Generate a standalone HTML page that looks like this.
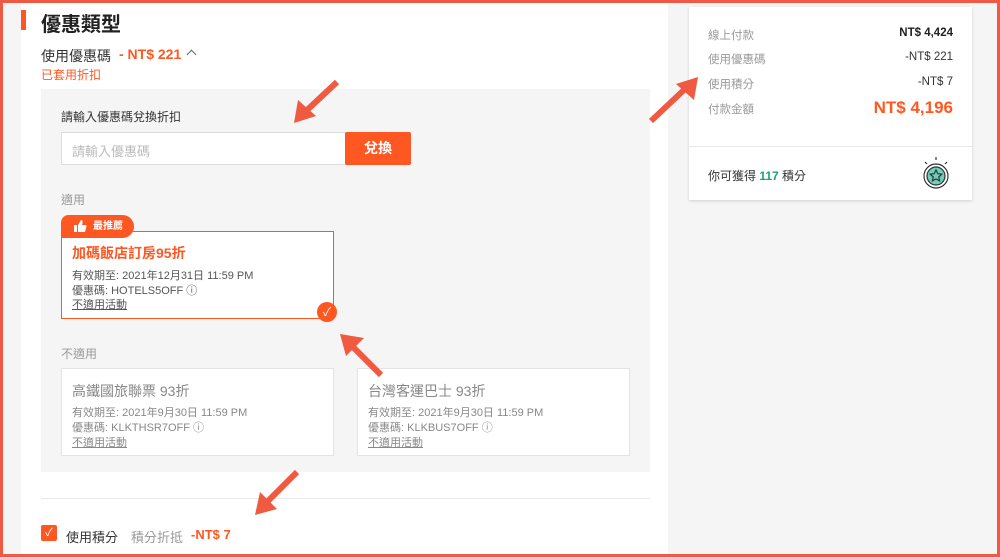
<!DOCTYPE html><html><head><meta charset="utf-8"><style>
*{margin:0;padding:0;box-sizing:border-box}
body{width:1000px;height:557px;overflow:hidden;font-family:"Liberation Sans","Noto Sans CJK TC",sans-serif;background:#f5f5f5;position:relative;color:#333}
.abs{position:absolute}
.frame{position:absolute;left:0;top:0;width:1000px;height:557px;border:3px solid #ee5a43;z-index:10;pointer-events:none}
.main{left:21px;top:0;width:647px;height:557px;background:#fff}
.card{border:1px solid #e4e4e4;background:#fff}
.t{font-size:11px;color:#888;white-space:nowrap}
</style></head><body>
<div class="frame"></div>
<div class="abs main"></div>
<div class="abs" style="left:21px;top:10px;width:5px;height:20px;background:#ff5722"></div>
<div class="abs" style="left:41px;top:8px;font-size:20px;font-weight:bold;color:#222">優惠類型</div>
<div class="abs" style="left:41px;top:46px;font-size:14px;color:#333">使用優惠碼</div>
<div class="abs" style="left:119px;top:46px;font-size:14px;font-weight:bold;color:#ff5722">- NT$ 221</div>
<div class="abs" style="left:188px;top:51px;width:7px;height:7px;border-left:1.5px solid #666;border-top:1.5px solid #666;transform:rotate(45deg)"></div>
<div class="abs" style="left:41px;top:66px;font-size:12px;color:#ff5722">已套用折扣</div>
<div class="abs" style="left:41px;top:89px;width:609px;height:383px;background:#f5f5f5"></div>
<div class="abs" style="left:61px;top:108px;font-size:12px;color:#333">請輸入優惠碼兌換折扣</div>
<div class="abs" style="left:61px;top:132px;width:285px;height:33px;background:#fff;border:1px solid #ddd;font-size:13px;color:#bbb;padding:8px 10px">請輸入優惠碼</div>
<div class="abs" style="left:345px;top:132px;width:66px;height:33px;background:#ff5722;color:#fff;font-size:14px;font-weight:bold;text-align:center;line-height:33px;border-radius:2px">兌換</div>
<div class="abs" style="left:61px;top:191px;font-size:12px;color:#999">適用</div>
<div class="abs" style="left:61px;top:231px;width:273px;height:88px;background:#fff;border:1px solid #ff5722"></div>
<div class="abs" style="left:61px;top:215px;width:73px;height:23px;background:#ff5722;border-radius:8px 12px 12px 0;color:#fff;font-size:10px;font-weight:bold;line-height:23px;padding-left:32px">最推薦</div>
<svg class="abs" style="left:73px;top:219px" width="14" height="14" viewBox="0 0 14 14"><path d="M1 6h3v7H1z M5 6l3-5c1 0 2 1 1.5 3L9 6h3.5c.8 0 1.2.7 1 1.4l-1.3 4.8c-.2.5-.6.8-1.1.8H5z" fill="#fff"/></svg>
<div class="abs" style="left:72px;top:243px;font-size:14px;font-weight:bold;color:#ff5722">加碼飯店訂房95折</div>
<div class="abs t" style="left:72px;top:267px;color:#555">有效期至: 2021年12月31日 11:59 PM</div>
<div class="abs t" style="left:72px;top:282px;color:#555">優惠碼: HOTELS5OFF ⓘ</div>
<div class="abs t" style="left:72px;top:296px;color:#555;text-decoration:underline">不適用活動</div>
<div class="abs" style="left:317px;top:302px;width:20px;height:20px;border-radius:50%;background:#ff5722;color:#fff;font-size:12px;text-align:center;line-height:20px">✓</div>
<div class="abs" style="left:61px;top:345px;font-size:12px;color:#999">不適用</div>
<div class="abs card" style="left:61px;top:368px;width:273px;height:88px"></div>
<div class="abs card" style="left:357px;top:368px;width:273px;height:88px"></div>
<div class="abs" style="left:72px;top:381px;font-size:14px;color:#888">高鐵國旅聯票 93折</div>
<div class="abs t" style="left:72px;top:404px">有效期至: 2021年9月30日 11:59 PM</div>
<div class="abs t" style="left:72px;top:419px">優惠碼: KLKTHSR7OFF ⓘ</div>
<div class="abs t" style="left:72px;top:434px;text-decoration:underline">不適用活動</div>
<div class="abs" style="left:368px;top:381px;font-size:14px;color:#888">台灣客運巴士 93折</div>
<div class="abs t" style="left:368px;top:404px">有效期至: 2021年9月30日 11:59 PM</div>
<div class="abs t" style="left:368px;top:419px">優惠碼: KLKBUS7OFF ⓘ</div>
<div class="abs t" style="left:368px;top:434px;text-decoration:underline">不適用活動</div>
<div class="abs" style="left:41px;top:498px;width:609px;height:1px;background:#e8e8e8"></div>
<div class="abs" style="left:41px;top:525px;width:16px;height:16px;background:#ff5722;border-radius:2px;color:#fff;font-size:11px;text-align:center;line-height:16px">✓</div>
<div class="abs" style="left:66px;top:527px;font-size:13px;color:#333">使用積分</div>
<div class="abs" style="left:131px;top:527px;font-size:13px;color:#999">積分折抵</div>
<div class="abs" style="left:191px;top:527px;font-size:13px;font-weight:bold;color:#ff5722">-NT$ 7</div>
<div class="abs" style="left:689px;top:7px;width:283px;height:193px;background:#fff;box-shadow:0 1px 3px rgba(0,0,0,.15)"></div>
<div class="abs t" style="left:708px;top:27px;font-size:11.5px;color:#999">線上付款</div>
<div class="abs t" style="left:708px;top:51px;font-size:11.5px;color:#999">使用優惠碼</div>
<div class="abs t" style="left:708px;top:76px;font-size:11.5px;color:#999">使用積分</div>
<div class="abs t" style="left:708px;top:101px;font-size:11.5px;color:#999">付款金額</div>
<div class="abs" style="right:47px;top:27px;font-size:11.5px;font-weight:bold;color:#222">NT$ 4,424</div>
<div class="abs" style="right:47px;top:51px;font-size:11.5px;color:#333">-NT$ 221</div>
<div class="abs" style="right:47px;top:76px;font-size:11.5px;color:#333">-NT$ 7</div>
<div class="abs" style="right:47px;top:98px;font-size:17px;font-weight:bold;color:#ff5722">NT$ 4,196</div>
<div class="abs" style="left:689px;top:146px;width:283px;height:1px;background:#e8e8e8"></div>
<div class="abs" style="left:708px;top:167px;font-size:12px;color:#333">你可獲得 <b style="color:#1aa37a">117</b> 積分</div>
<svg class="abs" style="left:916px;top:155px" width="40" height="40" viewBox="0 0 40 40"><g stroke="#333" stroke-width="1.2" fill="none"><path d="M20 2v3M9 7l2 2M31 7l-2 2"/><circle cx="20" cy="21" r="12"/><circle cx="20" cy="21" r="9" fill="#6fcfbd"/><path d="M20 15l1.8 3.7 4 .5-3 2.7.8 4-3.6-2-3.6 2 .8-4-3-2.7 4-.5z"/></g></svg>
<svg class="abs" style="left:0;top:0;z-index:11" width="1000" height="557"><g stroke="#ef5a40" stroke-width="6" fill="#ef5a40">
<line x1="337" y1="82" x2="305" y2="112"/><polygon stroke="none" points="294,123 298,100 316,116"/>
<line x1="651" y1="121" x2="686" y2="88"/><polygon stroke="none" points="698,77 694,100 676,84"/>
<line x1="381" y1="375" x2="352" y2="346"/><polygon stroke="none" points="340,334 364,338 346,356"/>
<line x1="297" y1="472" x2="266" y2="503"/><polygon stroke="none" points="255,515 260,492 277,509"/>
</g></svg>
</body></html>
